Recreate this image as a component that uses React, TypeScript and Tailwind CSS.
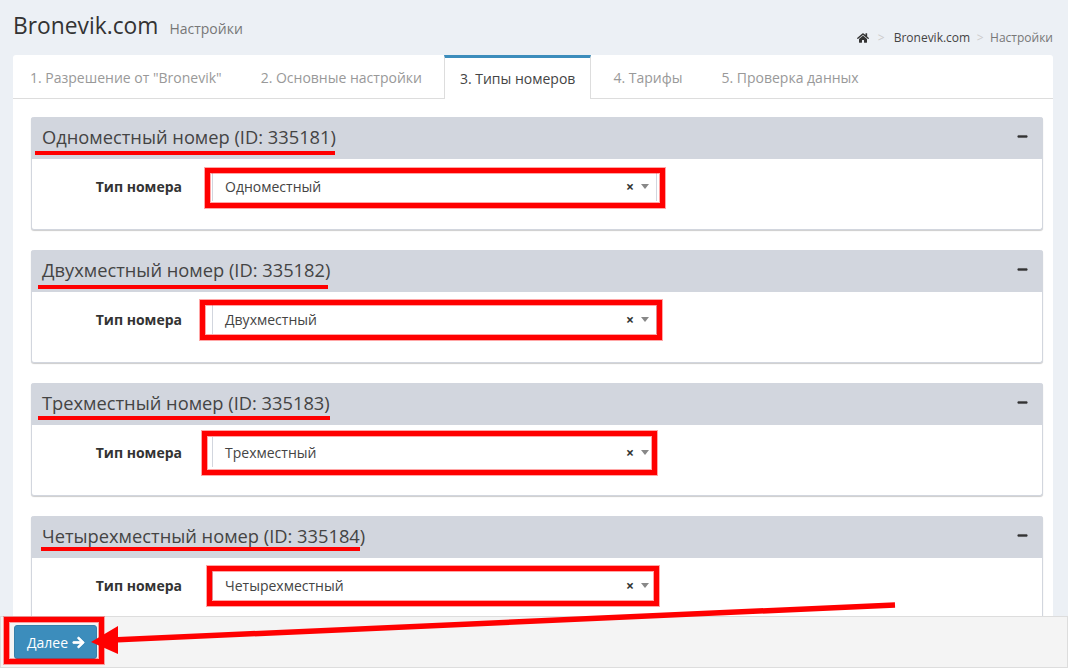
import { FaHome, FaArrowRight, FaMinus } from "react-icons/fa";

const tabs = [
    { label: '1. Разрешение от "Bronevik"', active: false },
    { label: "2. Основные настройки", active: false },
    { label: "3. Типы номеров", active: true },
    { label: "4. Тарифы", active: false },
    { label: "5. Проверка данных", active: false },
];

const rooms = [
    { title: "Одноместный номер (ID: 335181)", type: "Одноместный" },
    { title: "Двухместный номер (ID: 335182)", type: "Двухместный" },
    { title: "Трехместный номер (ID: 335183)", type: "Трехместный" },
    { title: "Четырехместный номер (ID: 335184)", type: "Четырехместный" },
];

// red marks drawn over the screenshot: [left, top, width, height]
const boxes = [
    [205, 168, 460, 40],
    [200, 300, 462, 40],
    [202, 431, 455, 44],
    [207, 566, 452, 40],
    [4, 617, 100, 47],
];

const lines = [
    [35, 151, 300, 4],
    [38, 285, 290, 4],
    [38, 416, 292, 4],
    [41, 547, 319, 4],
];

function RoomPanel({ title, type }: { title: string; type: string }) {
    return (
        <div className="mb-5 h-[113px] rounded-[3px] bg-white shadow-[0_1px_1px_rgba(0,0,0,0.2)] border-x border-b border-[#d2d6de]">
            <div className="-mx-px h-[42px] flex items-center justify-between pl-[11px] pr-[15px] pb-[2px] bg-[#d2d6de] rounded-t-[3px]">
                <h3 className="text-[18.3px] leading-[40px] text-[#444]">{title}</h3>
                <FaMinus className="text-[11px] text-[#333] -mt-[1px] stroke-[#333] stroke-[20px]" />
            </div>
            <div className="flex items-center pt-[12px]">
                <label className="w-[150px] text-right text-[14px] font-bold text-[#333]">Тип номера</label>
                <div className="ml-[30px] w-[445px] h-[30px] flex items-center justify-between pl-[12px] pr-[7px] border-x border-[#d2d6de] bg-white">
                    <span className="text-[14px] text-[#444]">{type}</span>
                    <span className="flex items-center gap-[7px] pt-[1px]">
                        <span className="text-[14px] leading-none font-bold text-[#333]">×</span>
                        <span className="w-0 h-0 border-x-[4px] border-t-[5px] border-x-transparent border-t-[#888]" />
                    </span>
                </div>
            </div>
        </div>
    );
}

export default function App() {
    return (
        <div className="relative h-[668px] w-[1068px] overflow-hidden bg-[#ecf0f5] font-['Open_Sans',sans-serif]">
            {/* Page header */}
            <div className="flex items-start justify-between pl-[13px] pr-[15px] h-[55px]">
                <div className="flex items-baseline gap-[11px] pt-[10px]">
                    <h1 className="text-[22.8px] leading-[32px] text-[#333]">Bronevik.com</h1>
                    <small className="text-[14px] text-[#777]">Настройки</small>
                </div>
                <div className="flex items-center pt-[29px] text-[12px] leading-[17px] text-[#444]">
                    <FaHome className="text-[12px] text-[#333]" />
                    <span className="mx-[9px] text-[#ccc]">&gt;</span>
                    <span>Bronevik.com</span>
                    <span className="mx-[6.5px] text-[#ccc]">&gt;</span>
                    <span className="text-[#777]">Настройки</span>
                </div>
            </div>

            {/* Tabs */}
            <div className="ml-[13px] w-[1040px] bg-white rounded-t-[3px] h-[700px]">
                <div className="flex h-[44px] border-b border-[#ddd] text-[14px]">
                    {tabs.map((tab) =>
                        tab.active ? (
                            <div
                                key={tab.label}
                                className="-mb-px h-[44px] px-[15px] mr-[5px] flex items-center border-t-[3px] border-t-[#3c8dbc] border-r border-l border-[#ddd] bg-white text-[#444]"
                            >
                                {tab.label}
                            </div>
                        ) : (
                            <div key={tab.label} className="px-[17px] mr-[5px] pt-[2px] flex items-center text-[#999]">
                                {tab.label}
                            </div>
                        ),
                    )}
                </div>
                <div className="pl-[18px] pr-[10px] pt-[18px]">
                    {rooms.map((room) => (
                        <RoomPanel key={room.title} {...room} />
                    ))}
                </div>
            </div>

            {/* Bottom bar */}
            <div className="absolute left-0 right-0 bottom-0 h-[52px] bg-[#f4f4f4] border border-[#ddd] pl-[13px] pt-[8px]">
                <button className="h-[34px] w-[83px] rounded-[3px] bg-[#3c8dbc] border border-[#367fa9] text-white text-[14px] flex items-center pl-[12px] gap-[4px]">
                    Далее <FaArrowRight className="text-[13px] stroke-white stroke-[30px]" />
                </button>
            </div>

            {/* Annotations */}
            {boxes.map(([left, top, width, height]) => (
                <div
                    key={`${left}-${top}`}
                    className="absolute border-[5px] border-[#ff0000] shadow-[0_0_0_1px_rgba(255,0,0,0.35),inset_0_0_0_1px_rgba(255,0,0,0.35)]"
                    style={{ left, top, width, height }}
                />
            ))}
            {lines.map(([left, top, width, height]) => (
                <div key={top} className="absolute bg-[#ff0000]" style={{ left, top, width, height }} />
            ))}
            <svg className="absolute left-0 top-0 pointer-events-none" width="1068" height="668">
                <line x1="895" y1="605" x2="112" y2="640" stroke="#ff0000" strokeWidth="5.5" />
                <polygon points="91,642 118,626 118,654" fill="#ff0000" />
            </svg>
        </div>
    );
}
